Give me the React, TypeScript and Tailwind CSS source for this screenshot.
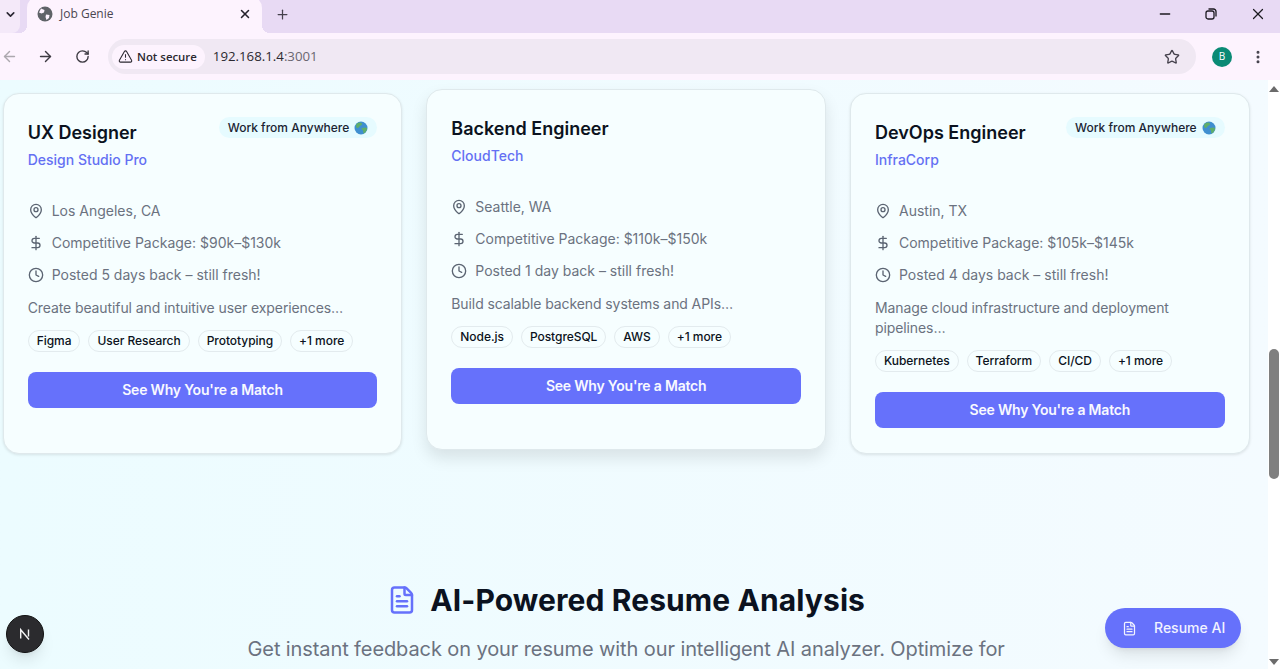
import { ArrowLeft, ArrowRight, ChevronDown, Clock, DollarSign, FileText, MapPin, Minus, MoreVertical, Plus, RotateCw, Star, TriangleAlert, X } from "lucide-react";

const jobs = [
  { title: "UX Designer", company: "Design Studio Pro", loc: "Los Angeles, CA", pay: "$90k–$130k", posted: "Posted 5 days back – still fresh!", desc: "Create beautiful and intuitive user experiences…", tags: ["Figma", "User Research", "Prototyping"], remote: true },
  { title: "Backend Engineer", company: "CloudTech", loc: "Seattle, WA", pay: "$110k–$150k", posted: "Posted 1 day back – still fresh!", desc: "Build scalable backend systems and APIs…", tags: ["Node.js", "PostgreSQL", "AWS"], remote: false, lifted: true },
  { title: "DevOps Engineer", company: "InfraCorp", loc: "Austin, TX", pay: "$105k–$145k", posted: "Posted 4 days back – still fresh!", desc: "Manage cloud infrastructure and deployment pipelines…", tags: ["Kubernetes", "Terraform", "CI/CD"], remote: true },
];

function Earth() {
  return (
    <svg width="14" height="14" viewBox="0 0 14 14" className="shrink-0">
      <circle cx="7" cy="7" r="6.5" fill="#3f8fd0" />
      <path d="M3 2.5c2-1.5 4-1.5 5 0 .5 1-1 2-2 2.5s-1 2-2.5 2S1.500 4 3 2.500zM8 7c1.500-.5 4-1 5 0 .3 2-1.500 5-3.500 5.500C9 11 9.500 9.500 8.500 9S7 7.500 8 7z" fill="#5fae6a" />
    </svg>
  );
}

function Card({ job }: { job: (typeof jobs)[number] }) {
  return (
    <div className={`flex flex-col rounded-2xl border border-[#dfe9ec] bg-[#f6feff] px-6 pt-[25px] pb-[25px] ${job.lifted ? "-translate-y-1 shadow-[0_8px_16px_rgba(0,0,0,0.1)]" : "shadow-[0_1px_3px_rgba(0,0,0,0.1)]"}`}>
      <div className="flex items-start justify-between">
        <div>
          <h3 className="text-lg leading-7 font-semibold text-[#0b1220]">{job.title}</h3>
          <p className="mt-[3px] text-sm leading-5 font-medium text-[#6470f3]">{job.company}</p>
        </div>
        {job.remote && (
          <span className="-mt-[2px] flex h-[21px] items-center gap-[5px] rounded-full bg-[#e6fbff] px-[9px] text-xs font-medium text-[#1a2433]">
            Work from Anywhere <Earth />
          </span>
        )}
      </div>
      <div className="mt-[31px] flex flex-col gap-3 text-sm leading-5 text-[#6b7280]">
        <div className="flex items-center gap-2"><MapPin size={16} className="text-[#5b6472]" />{job.loc}</div>
        <div className="flex items-center gap-2"><DollarSign size={16} className="text-[#5b6472]" />Competitive Package: {job.pay}</div>
        <div className="flex items-center gap-2"><Clock size={16} className="text-[#5b6472]" />{job.posted}</div>
      </div>
      <p className="mt-[13px] text-sm leading-5 tracking-[-0.1px] text-[#6b7280]">{job.desc}</p>
      <div className="mt-3 flex gap-2">
        {[...job.tags, "+1 more"].map((t) => (
          <span key={t} className="flex h-[22px] items-center rounded-full border border-[#e3ebee] px-2 text-xs font-medium tracking-[-0.05px] text-[#0b1220]">{t}</span>
        ))}
      </div>
      <button className="mt-5 h-9 rounded-lg bg-[#6671fb] text-sm font-semibold tracking-[-0.2px] text-[#f8f9ff]">See Why You're a Match</button>
    </div>
  );
}

export default function App() {
  return (
    <div className="relative flex h-[669px] w-[1280px] flex-col overflow-hidden font-['Inter',sans-serif]">
      <div className="flex h-[33px] shrink-0 items-stretch bg-[#e8daf4] pb-[5px] font-['Open_Sans',sans-serif]">
        <div className="-mb-[5px] flex w-[20px] items-center justify-center rounded-br-lg bg-[#f4e9f9] pb-[5px]"><ChevronDown size={13} strokeWidth={3} className="text-[#2b2733]" /></div>
        <div className="relative -mt-1 -mb-[5px] ml-[7px] flex w-[235px] items-center rounded-t-xl bg-[#fdf3fe] pr-[10px] pb-[1px] pl-[10px]">
          <svg width="16" height="16" viewBox="0 0 16 16" className="shrink-0"><circle cx="8" cy="8" r="7.500" fill="#5f6368" /><path d="M4 2.500 7.500 4 7 6.500 4.500 7.500 2 6.500zM9 8.500l3.500.5-.5 3-2.500 2L8.500 11z" fill="#fdf3fe" /></svg>
          <span className="ml-[7px] flex-1 text-xs text-[#4a4650]">Job Genie</span>
          <X size={14} strokeWidth={2.6} className="text-[#26222c]" />
          <div className="absolute right-[-8px] bottom-0 h-2 w-2 bg-[radial-gradient(circle_at_100%_0,transparent_8px,#fdf3fe_8px)]" />
          <div className="absolute bottom-0 left-[-8px] h-2 w-2 bg-[radial-gradient(circle_at_0_0,transparent_8px,#fdf3fe_8px)]" />
        </div>
        <div className="ml-[13px] flex items-center"><Plus size={15} strokeWidth={2} className="text-[#45414c]" /></div>
        <div className="flex-1" />
        <div className="flex items-center pr-[13px] text-[#1c1a20]">
          <Minus size={16} />
          <svg width="14" height="14" viewBox="0 0 14 14" fill="none" stroke="currentColor" strokeWidth="1.300" className="ml-[31px]"><rect x="2" y="4" width="8" height="8" rx="2" /><path d="M4.500 2h5A2.500 2.500 0 0 1 12 4.500v5" /></svg>
          <X size={18} strokeWidth={1.6} className="ml-[31px]" />
        </div>
      </div>
      <div className="flex h-[47px] shrink-0 items-center bg-[#fdf3fe] font-['Open_Sans',sans-serif] text-[#3d3a42]">
        <ArrowLeft size={17} className="ml-[1px] text-[#aca8ae]" />
        <ArrowRight size={17} className="ml-[19px]" />
        <RotateCw size={15} strokeWidth={2.2} className="ml-[21px]" />
        <div className="ml-[18px] flex h-[35px] w-[1088px] items-center rounded-full bg-[#f0e8f3] pr-[16px] pl-[4px]">
          <div className="flex h-[24px] items-center gap-[4px] rounded-full bg-[#fdf3fe] pr-[8px] pl-[6px] text-[11.4px] font-semibold text-[#2b2830]">
            <TriangleAlert size={15} strokeWidth={1.700} />Not secure
          </div>
          <span className="ml-[8px] flex-1 text-[13.25px] text-[#2b2830]">192.168.1.4<span className="text-[#6a6670]">:3001</span></span>
          <Star size={16} strokeWidth={2} className="text-[#45414c]" />
        </div>
        <div className="ml-[16px] flex h-5 w-5 items-center justify-center rounded-full bg-[#0a8a75] text-[10px] text-white">B</div>
        <MoreVertical size={16} strokeWidth={2.500} className="ml-[18px] text-[#45414c]" />
      </div>
      <div className="flex min-h-0 flex-1">
        <main className="min-w-0 flex-1 overflow-hidden bg-gradient-to-r from-[#ecfcff] to-[#f4fbff] pt-[13px] pl-[2.67px]">
          <div className="grid w-[1247px] grid-cols-3 gap-6">
            {jobs.map((j) => <Card key={j.title} job={j} />)}
          </div>
          <div className="mt-[128px] flex w-[1247px] flex-col items-center">
            <h2 className="flex items-center gap-[13px] text-3xl leading-9 font-bold tracking-[0.1px] text-[#0b1220]"><FileText size={30} className="text-[#6671fb]" />AI-Powered Resume Analysis</h2>
            <p className="mt-[17px] w-[768px] text-center text-xl leading-7 tracking-[-0.1px] text-[#6b7280]">Get instant feedback on your resume with our intelligent AI analyzer. Optimize for</p>
          </div>
        </main>
        <div className="flex w-3 shrink-0 flex-col items-center bg-white">
          <div className="mt-[6px] h-0 w-0 border-x-[5px] border-b-[6px] border-x-transparent border-b-[#6b6b6b]" />
          <div className="mt-[257px] h-[130px] w-[10px] rounded-full bg-[#7f7f7f]" />
          <div className="mt-auto mb-[4px] h-0 w-0 border-x-[5px] border-t-[6px] border-x-transparent border-t-[#6b6b6b]" />
        </div>
      </div>
      <div className="absolute top-[615px] left-[6px] flex h-[38px] w-[38px] items-center justify-center rounded-full border border-[#111] bg-[#2b2b2e] text-sm text-white shadow-lg">
        <svg width="14" height="14" viewBox="0 0 14 14" fill="none" stroke="#f4f4f4" strokeWidth="1.400"><path d="M2.700 11.500V2.700L11 12.500M10.500 2.500v7" /></svg>
      </div>
      <button className="absolute top-[608px] left-[1105px] flex h-10 w-[136px] items-center rounded-full bg-[#6671fb] pl-[17px] text-sm font-medium text-[#f2f3ff] shadow-lg">
        <FileText size={15} /><span className="ml-[17px]">Resume AI</span>
      </button>
    </div>
  );
}
